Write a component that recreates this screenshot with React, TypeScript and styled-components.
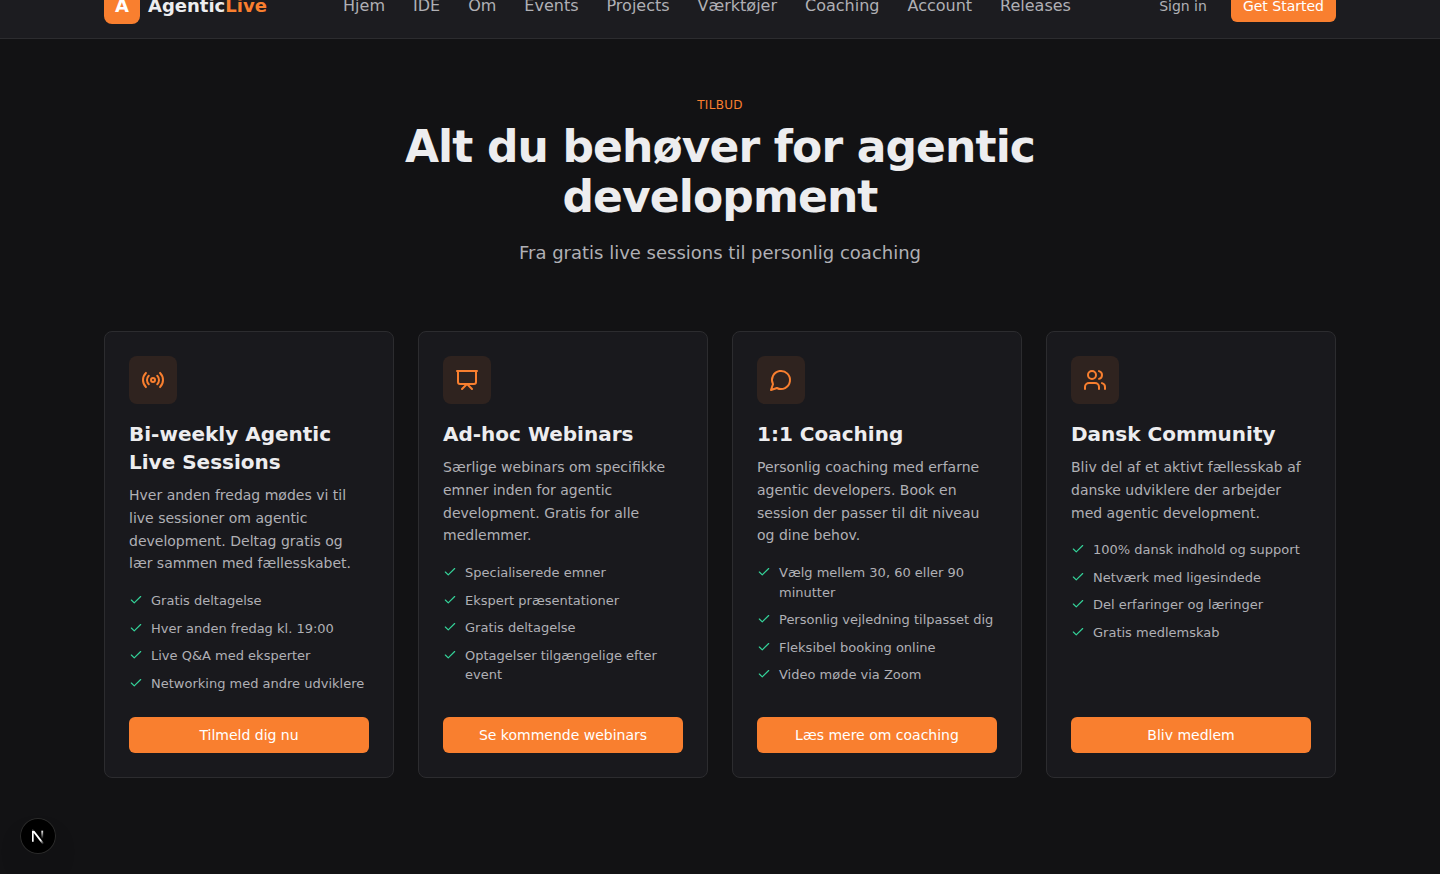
import React from "react";
import styled, { createGlobalStyle } from "styled-components";
import { Check, Presentation, Radio, Users, type LucideIcon } from "lucide-react";

const color = {
  page: "#121214",
  header: "#1c1c20",
  card: "#19191d",
  border: "#2c2c2f",
  text: "#ededef",
  muted: "#b0b0b5",
  accent: "#f97f2f",
  accentSoft: "rgba(249, 127, 47, 0.1)",
  success: "#34d399",
};

const GlobalStyle = createGlobalStyle`
  *, *::before, *::after { box-sizing: border-box; }
  body {
    margin: 0;
    background: ${color.page};
    color: ${color.text};
    font-family: "DejaVu Sans", sans-serif;
    font-size: 16px;
    line-height: 1.5;
  }
  h1, h2, h3, p, ul { margin: 0; padding: 0; }
  ul { list-style: none; }
  a { color: inherit; text-decoration: none; }
`;

const Page = styled.div`
  min-height: 100vh;
  overflow: hidden;
`;

const Header = styled.header`
  margin-top: -26px;
  background: ${color.header};
  border-bottom: 1px solid ${color.border};
`;

const Container = styled.div`
  max-width: 1280px;
  margin: 0 auto;
  padding: 0 24px;
`;

const HeaderBar = styled(Container)`
  display: flex;
  align-items: center;
  justify-content: space-between;
  height: 64px;
`;

const Brand = styled.a`
  display: flex;
  align-items: center;
  gap: 8px;
  font-size: 18px;
  font-weight: 700;
  line-height: 28px;
`;

const BrandMark = styled.span`
  display: grid;
  place-items: center;
  width: 36px;
  height: 36px;
  border-radius: 8px;
  background: ${color.accent};
  color: #fff;
`;

const BrandAccent = styled.span`
  color: ${color.accent};
`;

const Nav = styled.nav`
  display: flex;
  gap: 28px;
  color: ${color.muted};
`;

const Actions = styled.div`
  display: flex;
  align-items: center;
  gap: 12px;
`;

const Button = styled.button<{ $variant?: "solid" | "ghost"; $block?: boolean }>`
  width: ${(p) => (p.$block ? "100%" : "auto")};
  height: ${(p) => (p.$block ? 36 : 32)}px;
  padding: 0 12px;
  border: 0;
  border-radius: 6px;
  background: ${(p) => (p.$variant === "ghost" ? "transparent" : color.accent)};
  color: ${(p) => (p.$variant === "ghost" ? color.muted : "#fff")};
  font-family: inherit;
  font-size: 14px;
  line-height: 20px;
  cursor: pointer;
`;

const Section = styled.section`
  padding: 56px 0 96px;
`;

const Intro = styled.div`
  max-width: 720px;
  margin: 0 auto 64px;
  text-align: center;
`;

const Eyebrow = styled.p`
  margin-bottom: 6px;
  color: ${color.accent};
  font-size: 12px;
  line-height: 21px;
  letter-spacing: 0.025em;
  text-transform: uppercase;
`;

const Heading = styled.h2`
  margin-bottom: 16px;
  font-size: 44px;
  font-weight: 700;
  line-height: 50px;
  letter-spacing: -0.02em;
`;

const Lead = styled.p`
  color: ${color.muted};
  font-size: 18px;
  line-height: 29px;
`;

const CardGrid = styled.div`
  display: grid;
  grid-template-columns: repeat(4, minmax(0, 1fr));
  gap: 24px;
`;

const Card = styled.article`
  display: flex;
  flex-direction: column;
  padding: 24px;
  border: 1px solid ${color.border};
  border-radius: 8px;
  background: ${color.card};
`;

const IconTile = styled.div`
  display: grid;
  place-items: center;
  width: 48px;
  height: 48px;
  margin-bottom: 16px;
  border-radius: 8px;
  background: ${color.accentSoft};
  color: ${color.accent};
`;

const CardTitle = styled.h3`
  margin-bottom: 8px;
  font-size: 20px;
  font-weight: 700;
  line-height: 28px;
`;

const CardText = styled.p`
  margin-bottom: 16px;
  color: ${color.muted};
  font-size: 14px;
  line-height: 1.625;
`;

const FeatureList = styled.ul`
  display: flex;
  flex: 1;
  flex-direction: column;
  gap: 8px;
  margin-bottom: 24px;
  color: ${color.muted};
  font-size: 13px;
`;

const Feature = styled.li`
  display: flex;
  gap: 8px;
`;

const FeatureCheck = styled(Check)`
  flex: none;
  margin-top: 2px;
  color: ${color.success};
`;

const DevBadge = styled.button`
  position: fixed;
  left: 20px;
  bottom: 20px;
  display: grid;
  place-items: center;
  width: 36px;
  height: 36px;
  padding: 0;
  border: 0;
  border-radius: 50%;
  background: #000;
  box-shadow: inset 0 0 0 1px #2b2b2b, 0 16px 32px -8px rgba(0, 0, 0, 0.24);
  cursor: pointer;
`;

const SpeechBubble = () => (
  <svg width="24" height="24" viewBox="0 0 24 24" fill="none" stroke="currentColor" strokeWidth="2" strokeLinecap="round" strokeLinejoin="round">
    <path d="M7.9 20A9 9 0 1 0 4 16.1L2 22Z" />
  </svg>
);

const NextMark = () => (
  <svg width="36" height="36" viewBox="0 0 36 36" fill="none">
    <g transform="translate(10.4 11.2)">
      <path d="M13.3 15.2 L2.34 1 V12.6" stroke="url(#diagonal)" strokeWidth="1.86" mask="url(#fold)" />
      <path d="M11.825 1.5 V13.1" stroke="url(#stem)" strokeWidth="1.86" />
    </g>
    <defs>
      <linearGradient id="diagonal" x1="9.95" y1="11.1" x2="15.1" y2="17.2" gradientUnits="userSpaceOnUse">
        <stop stopColor="#fff" />
        <stop offset="0.6" stopColor="#fff" stopOpacity="0" />
        <stop offset="1" stopColor="#fff" stopOpacity="0" />
      </linearGradient>
      <linearGradient id="stem" x1="11.8" y1="1.06" x2="11.7" y2="9.6" gradientUnits="userSpaceOnUse">
        <stop stopColor="#fff" />
        <stop offset="1" stopColor="#fff" stopOpacity="0" />
      </linearGradient>
      <mask id="fold">
        <rect width="100%" height="100%" fill="#fff" />
        <rect width="5" height="1.5" fill="#000" />
      </mask>
    </defs>
  </svg>
);

const links = ["Hjem", "IDE", "Om", "Events", "Projects", "Værktøjer", "Coaching", "Account", "Releases"];

type Offer = {
  icon: LucideIcon | React.FC;
  title: string;
  text: string;
  features: string[];
  action: string;
};

const offers: Offer[] = [
  {
    icon: Radio,
    title: "Bi-weekly Agentic Live Sessions",
    text: "Hver anden fredag mødes vi til live sessioner om agentic development. Deltag gratis og lær sammen med fællesskabet.",
    features: ["Gratis deltagelse", "Hver anden fredag kl. 19:00", "Live Q&A med eksperter", "Networking med andre udviklere"],
    action: "Tilmeld dig nu",
  },
  {
    icon: Presentation,
    title: "Ad-hoc Webinars",
    text: "Særlige webinars om specifikke emner inden for agentic development. Gratis for alle medlemmer.",
    features: ["Specialiserede emner", "Ekspert præsentationer", "Gratis deltagelse", "Optagelser tilgængelige efter event"],
    action: "Se kommende webinars",
  },
  {
    icon: SpeechBubble,
    title: "1:1 Coaching",
    text: "Personlig coaching med erfarne agentic developers. Book en session der passer til dit niveau og dine behov.",
    features: ["Vælg mellem 30, 60 eller 90 minutter", "Personlig vejledning tilpasset dig", "Fleksibel booking online", "Video møde via Zoom"],
    action: "Læs mere om coaching",
  },
  {
    icon: Users,
    title: "Dansk Community",
    text: "Bliv del af et aktivt fællesskab af danske udviklere der arbejder med agentic development.",
    features: ["100% dansk indhold og support", "Netværk med ligesindede", "Del erfaringer og læringer", "Gratis medlemskab"],
    action: "Bliv medlem",
  },
];

export default function App() {
  return (
    <Page>
      <GlobalStyle />
      <Header>
        <HeaderBar>
          <Brand href="#">
            <BrandMark>A</BrandMark>
            <span>
              Agentic<BrandAccent>Live</BrandAccent>
            </span>
          </Brand>
          <Nav>
            {links.map((label) => (
              <a key={label} href="#">
                {label}
              </a>
            ))}
          </Nav>
          <Actions>
            <Button $variant="ghost">Sign in</Button>
            <Button>Get Started</Button>
          </Actions>
        </HeaderBar>
      </Header>
      <main>
        <Section>
          <Container>
            <Intro>
              <Eyebrow>Tilbud</Eyebrow>
              <Heading>Alt du behøver for agentic development</Heading>
              <Lead>Fra gratis live sessions til personlig coaching</Lead>
            </Intro>
            <CardGrid>
              {offers.map(({ icon: Icon, title, text, features, action }) => (
                <Card key={title}>
                  <IconTile>
                    <Icon />
                  </IconTile>
                  <CardTitle>{title}</CardTitle>
                  <CardText>{text}</CardText>
                  <FeatureList>
                    {features.map((feature) => (
                      <Feature key={feature}>
                        <FeatureCheck size={14} />
                        <span>{feature}</span>
                      </Feature>
                    ))}
                  </FeatureList>
                  <Button $block>{action}</Button>
                </Card>
              ))}
            </CardGrid>
          </Container>
        </Section>
      </main>
      <DevBadge aria-label="Open Next.js Dev Tools">
        <NextMark />
      </DevBadge>
    </Page>
  );
}
